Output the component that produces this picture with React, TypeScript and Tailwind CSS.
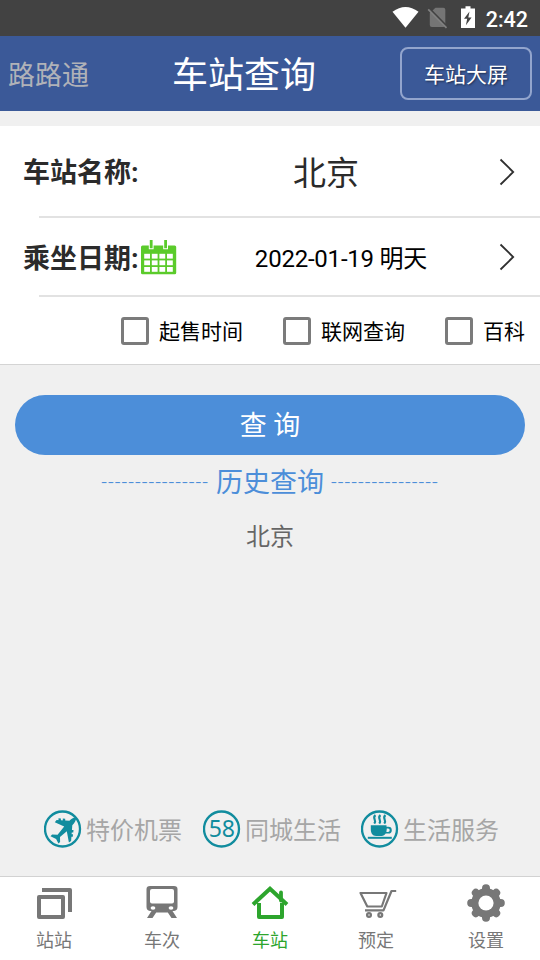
import type { ReactNode } from 'react';

function StatusIcons() {
  return (
    <svg width="84" height="36" viewBox="392 0 84 36">
      <path d="M392.5 11.8Q405.5 2.4 418.5 11.8L405.5 27.8Z" fill="#fff" />
      <path d="M435.5 7.8h7.8a2 2 0 0 1 2 2V25a2 2 0 0 1-2 2h-11.5a2 2 0 0 1-2-2V13Z" fill="#757575" />
      <path d="M429 8.2l18.5 18.8" stroke="#424242" strokeWidth="2" />
      <path d="M428.2 9.3l18.3 18.6" stroke="#808080" strokeWidth="1.7" />
      <path d="M465.5 6.2h5v2.3h4.5v19.4h-14V8.5h4.5Z" fill="#fff" />
      <path d="M469.5 11.5l-5.5 7.3h3.2l-1.3 6.4 5.7-7.8h-3.3Z" fill="#424242" />
    </svg>
  );
}

function Chevron() {
  return (
    <svg className="mr-6 shrink-0" width="18" height="28" viewBox="0 0 18 28" fill="none" stroke="#303030" strokeWidth="1.8">
      <path d="M2.5 1.5L15.2 14L2.5 26.5" />
    </svg>
  );
}

function CalendarIcon() {
  return (
    <svg className="ml-px" width="37" height="36" viewBox="140 239 37 36">
      <rect x="141" y="245.5" width="35.2" height="28.7" rx="1.5" fill="#5bcb2b" />
      <path d="M148.8 244v5.3h4.8V244M163.2 244v5.3h4.8V244" fill="#fff" />
      <path d="M151.2 240v8.3M165.6 240v8.3" stroke="#5bcb2b" strokeWidth="2.8" />
      {[253.8, 260.4, 267].map((y) =>
        [144.2, 151.8, 159.4, 167].map((x) => (
          <rect key={`${x}-${y}`} x={x} y={y} width="5.8" height="4.8" fill="#fff" />
        )),
      )}
    </svg>
  );
}

function Check({ label }: { label: string }) {
  return (
    <label className="flex items-center">
      <span className="mr-[10px] size-7 rounded-[3px] border-[3px] border-[#7b7b7b]" />
      <span className="pt-[3px] text-[21px] leading-7 text-black">{label}</span>
    </label>
  );
}

function Service({ label, children }: { label: string; children: ReactNode }) {
  return (
    <div className="flex items-center">
      <svg className="mr-1" width="38" height="38" viewBox="0 0 38 38">
        <circle cx="18.5" cy="19" r="17.5" fill="none" stroke="#118c9e" strokeWidth="2.3" />
        {children}
      </svg>
      <span className="pt-[5px] text-2xl leading-[33px] text-[#a6a6a6]">{label}</span>
    </div>
  );
}

function Tab({ label, active, shift, children }: { label: string; active?: boolean; shift?: boolean; children: ReactNode }) {
  return (
    <div className={`flex flex-1 flex-col items-center pt-[6px] ${active ? 'text-[#2da52d]' : 'text-[#777777]'}`}>
      <svg width="40" height="40" viewBox="0 0 40 40" fill="none">
        {children}
      </svg>
      <span className={`mt-[5px] text-[18px] leading-[26px] ${shift ? 'mr-1' : ''}`}>{label}</span>
    </div>
  );
}

export default function App() {
  return (
    <div className="flex h-[960px] w-[540px] flex-col overflow-hidden bg-[#f0f0f0] font-[Roboto,'Noto_Sans_CJK_SC',sans-serif] text-[#2b2b2b]">
      <div className="flex h-9 shrink-0 items-center justify-end bg-[#424242] pr-[12px]">
        <StatusIcons />
        <span className="ml-[10px] pt-[3px] text-[21.5px] font-medium leading-[33px] text-white">2:42</span>
      </div>

      <header className="flex h-[75px] shrink-0 items-center bg-[#3b5998] pl-2 pr-2">
        <span className="w-[164px] pt-[6px] text-[27px] text-[#b0b2b8]">路路通</span>
        <h1 className="w-[228px] pt-[6px] text-[36px] leading-[69px] text-white">车站查询</h1>
        <button className="h-[53px] w-[132px] rounded-lg border-2 border-[#93a5cd] pt-[5px] text-[21px] text-white [text-shadow:1px_1px_2px_#1e2c4c]">
          车站大屏
        </button>
      </header>

      <section className="mt-[15px] flex h-[239px] shrink-0 flex-col border-b border-[#d4d4d4] bg-white">
        <div className="flex h-[90px] items-center pt-[2px]">
          <span className="w-[178px] pl-[23px] pt-[2px] text-[27px] font-bold">车站名称:</span>
          <span className="flex-1 pr-6 pt-1 text-center text-[33px] leading-[44px]">北京</span>
          <Chevron />
        </div>
        <div className="ml-[39px] h-[2px] bg-[#e2e2e2]" />
        <div className="flex h-[77px] items-center">
          <div className="flex w-[178px] items-center pl-[23px]">
            <span className="whitespace-nowrap pt-[5px] text-[27px] font-bold">乘坐日期:</span>
            <CalendarIcon />
          </div>
          <span className="flex-1 pl-[6px] pt-1 text-center text-2xl tracking-[-0.22px] text-black">2022-01-19 明天</span>
          <Chevron />
        </div>
        <div className="ml-[39px] h-[2px] bg-[#e2e2e2]" />
        <div className="flex flex-1 items-center justify-end gap-10 pr-[15px]">
          <Check label="起售时间" />
          <Check label="联网查询" />
          <Check label="百科" />
        </div>
      </section>

      <button className="mx-[15px] mt-[30px] h-[60px] shrink-0 rounded-full bg-[#4c8ed9] pt-[3px] text-[27px] text-white">查 询</button>

      <div className="mt-2 flex h-10 items-center justify-center gap-[7px] text-[27px] leading-10 text-[#4c8ed9]">
        <span className="-mt-[3px] text-xl font-light leading-9 tracking-[1px]">----------------</span>
        <span>历史查询</span>
        <span className="-mt-[3px] text-xl font-light leading-9 tracking-[1px]">----------------</span>
      </div>
      <div className="mt-[18px] text-center text-2xl text-[#666666]">北京</div>

      <div className="mb-[28px] mt-auto flex items-center gap-[21px] pl-11">
        <Service label="特价机票">
          <g fill="#118c9e">
            <path d="M32.2 7.6c-2.3-.7-4.6.9-6.8 3.2L12.6 9.9l-1.8 2.4 9.4 4.3-6.6 8.1-5.5-.2-1.6 1.8 5.6 2.7 2.3 4.6 1.7-1.5-.1-5.2 6.8-5.6 2.1 11.2 2.2-1.5 1.2-15.8c2.3-2.2 4-4.7 3.9-7.6Z" />
            <path d="M14.5 8.2l2.4.3v3h-2.4ZM18.8 8.5l2.4.3v3h-2.4ZM26.5 20h3l-.2 2.4h-3ZM26 24.3h3l-.2 2.4h-3Z" />
          </g>
        </Service>
        <Service label="同城生活">
          <text x="18.8" y="27.4" textAnchor="middle" className="fill-[#118c9e] font-['Noto_Sans'] text-[23px]">
            58
          </text>
        </Service>
        <div className="-ml-px">
          <Service label="生活服务">
            <path d="M9.8 15.3h15.7v1.5h1.9a3.4 3.4 0 0 1 0 6.8h-2.7c-1 1.5-2.3 2.4-4 2.4h-5.6c-3.8 0-5.3-3-5.3-7Z" fill="#118c9e" />
            <path d="M25.8 18.5h1.2a1.7 1.7 0 0 1 0 3.4h-1.6Z" fill="#f0f0f0" />
            <path d="M6.8 27.8h24" stroke="#118c9e" strokeWidth="2" />
            <path
              d="M14.5 5.2c-4 3 1.8 4.6-1.2 8.4M19.5 5.2c-4 3 1.8 4.6-1.2 8.4M24.5 5.2c-4 3 1.8 4.6-1.2 8.4"
              fill="none"
              stroke="#118c9e"
              strokeWidth="2.1"
            />
          </Service>
        </div>
      </div>

      <nav className="flex h-[84px] shrink-0 border-t border-[#d2d2d2] bg-white">
        <Tab label="站站">
          <rect x="5" y="14" width="24" height="20" stroke="currentColor" strokeWidth="4" strokeLinejoin="round" />
          <path d="M8 7h28v22" stroke="currentColor" strokeWidth="4" strokeLinejoin="round" />
        </Tab>
        <Tab label="车次">
          <path
            d="M8 3h24q3.5 0 3.5 3v18q0 3.3-3.5 4h-1.5l4.5 7h-5.5l-3.7-5.5H14.2L10.5 35H5l4.5-7H8q-3.5-.7-3.5-4V6q0-3 3.5-3Z"
            fill="currentColor"
          />
          <rect x="8" y="6" width="24" height="14.5" rx="2" fill="#fff" />
          <ellipse cx="11" cy="25" rx="2.4" ry="1.8" fill="#fff" />
          <ellipse cx="29" cy="25" rx="2.4" ry="1.8" fill="#fff" />
        </Tab>
        <Tab label="车站" active>
          <path d="M3 21.5L20 5.8l17 15.7" stroke="currentColor" strokeWidth="4" />
          <path d="M9 20v14h23V20" stroke="currentColor" strokeWidth="4" strokeLinejoin="round" />
          <path d="M31 9.5v8" stroke="currentColor" strokeWidth="3.8" strokeLinecap="round" />
        </Tab>
        <Tab label="预定" shift>
          <path d="M2.5 10h26l-4.7 13.5H9.3Z" stroke="currentColor" strokeWidth="2.2" strokeLinejoin="round" />
          <path d="M7 27.4h18.5L33.5 8h4.7" stroke="currentColor" strokeWidth="2.2" strokeLinejoin="round" />
          <circle cx="11" cy="32" r="1.9" stroke="currentColor" strokeWidth="2.3" />
          <circle cx="22.3" cy="32" r="1.9" stroke="currentColor" strokeWidth="2.3" />
        </Tab>
        <Tab label="设置">
          <g stroke="currentColor">
            <circle cx="20" cy="20" r="11" strokeWidth="7.5" />
            <path d="M20 5.2v29.6M5.2 20h29.6M9.8 9.8l20.4 20.4M30.2 9.8L9.8 30.2" strokeWidth="8" strokeLinecap="round" />
          </g>
          <circle cx="20" cy="20" r="7.6" fill="#fff" />
        </Tab>
      </nav>
    </div>
  );
}
